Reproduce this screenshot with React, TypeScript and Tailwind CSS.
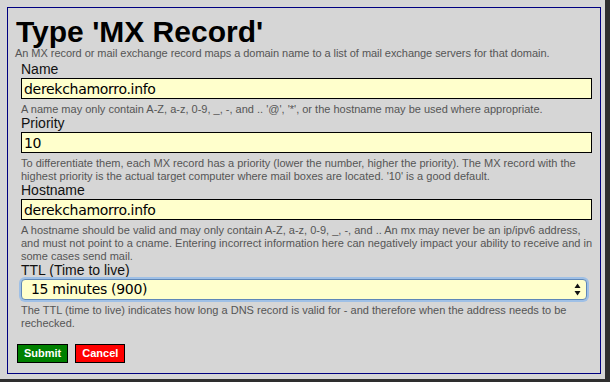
import React from 'react';

const FIELD_INPUT =
  'block w-full h-[21px] border border-black bg-[#ffffcc] px-[2px] text-[14px] leading-[19px] tracking-[-0.3px] text-black outline-none';

const Label: React.FC<{ children: React.ReactNode; className?: string }> = ({ children, className = '' }) => (
  <label className={`block text-[14px] leading-[15px] text-[#111] ${className}`}>{children}</label>
);

// help text keeps the reference's own line breaks
const Help: React.FC<{ lines: string[] }> = ({ lines }) => (
  <p className="mt-[4px] text-[11px] leading-[13px] text-[#555] whitespace-nowrap">
    {lines.map((line, i) => (
      <span key={i} className="block">
        {line}
      </span>
    ))}
  </p>
);

export default function App() {
  return (
    <div className="w-[610px] h-[382px] bg-[#2e2e2e] overflow-hidden" style={{ fontFamily: '"Liberation Sans", Arial, sans-serif' }}>
      <div className="w-[605px] h-[379px] bg-[#d6d6d6] pt-[7px] pl-[7px]">
        <div className="w-[594px] h-[367px] border border-[#000080] pl-[8px] pt-[9px]">
          {/* Heading */}
          <h1 className="text-[30px] leading-[30px] font-bold text-black">Type 'MX Record'</h1>
          <p className="-ml-px text-[11px] leading-[13px] text-[#555] tracking-[-0.05px]">
            An MX record or mail exchange record maps a domain name to a list of mail exchange servers for that domain.
          </p>

          {/* Fields */}
          <div className="pl-[5px] pr-[8px]">
            <Label className="mt-[2px]">Name</Label>
            <input
              className={`mt-[1px] ${FIELD_INPUT}`}
              style={{ fontFamily: '"DejaVu Sans", sans-serif' }}
              defaultValue="derekchamorro.info"
            />
            <Help lines={["A name may only contain A-Z, a-z, 0-9, _, -, and .. '@', '*', or the hostname may be used where appropriate."]} />

            <Label>Priority</Label>
            <input className={`mt-[1px] ${FIELD_INPUT}`} style={{ fontFamily: '"DejaVu Sans", sans-serif' }} defaultValue="10" />
            <Help
              lines={[
                'To differentiate them, each MX record has a priority (lower the number, higher the priority). The MX record with the',
                "highest priority is the actual target computer where mail boxes are located. '10' is a good default.",
              ]}
            />

            <Label>Hostname</Label>
            <input
              className={`mt-[1px] ${FIELD_INPUT}`}
              style={{ fontFamily: '"DejaVu Sans", sans-serif' }}
              defaultValue="derekchamorro.info"
            />
            <Help
              lines={[
                'A hostname should be valid and may only contain A-Z, a-z, 0-9, _, -, and .. An mx may never be an ip/ipv6 address,',
                'and must not point to a cname. Entering incorrect information here can negatively impact your ability to receive and in',
                'some cases send mail.',
              ]}
            />

            <Label>TTL (Time to live)</Label>
            <div className="relative mt-[1px] w-[566px]">
              <select
                className="block w-full h-[21px] appearance-none rounded-[4px] border border-[#5f87b8] bg-[#ffffcc] pl-[9px] text-[14px] leading-[19px] tracking-[-0.3px] text-black outline-none shadow-[0_0_0_2px_#9fc0e6]"
                style={{ fontFamily: '"DejaVu Sans", sans-serif' }}
                defaultValue="900"
              >
                <option value="900">15 minutes (900)</option>
              </select>
              <svg className="pointer-events-none absolute right-[6px] top-[4px]" width="7" height="13" viewBox="0 0 7 13">
                <path d="M3.5 0.5 L6.5 5 L0.5 5 Z" fill="#111" />
                <path d="M0.5 8 L6.5 8 L3.5 12.5 Z" fill="#111" />
              </svg>
            </div>
            <Help
              lines={[
                'The TTL (time to live) indicates how long a DNS record is valid for - and therefore when the address needs to be',
                'rechecked.',
              ]}
            />
          </div>

          {/* Actions */}
          <div className="mt-[14px] flex gap-[7px] pl-px">
            <button className="h-[19px] border border-black bg-[#008000] px-[6px] text-[11px] leading-[17px] font-bold text-white">
              Submit
            </button>
            <button className="h-[19px] border border-black bg-[#ff0000] px-[6px] text-[11px] leading-[17px] font-bold text-white">
              Cancel
            </button>
          </div>
        </div>
      </div>
    </div>
  );
}
